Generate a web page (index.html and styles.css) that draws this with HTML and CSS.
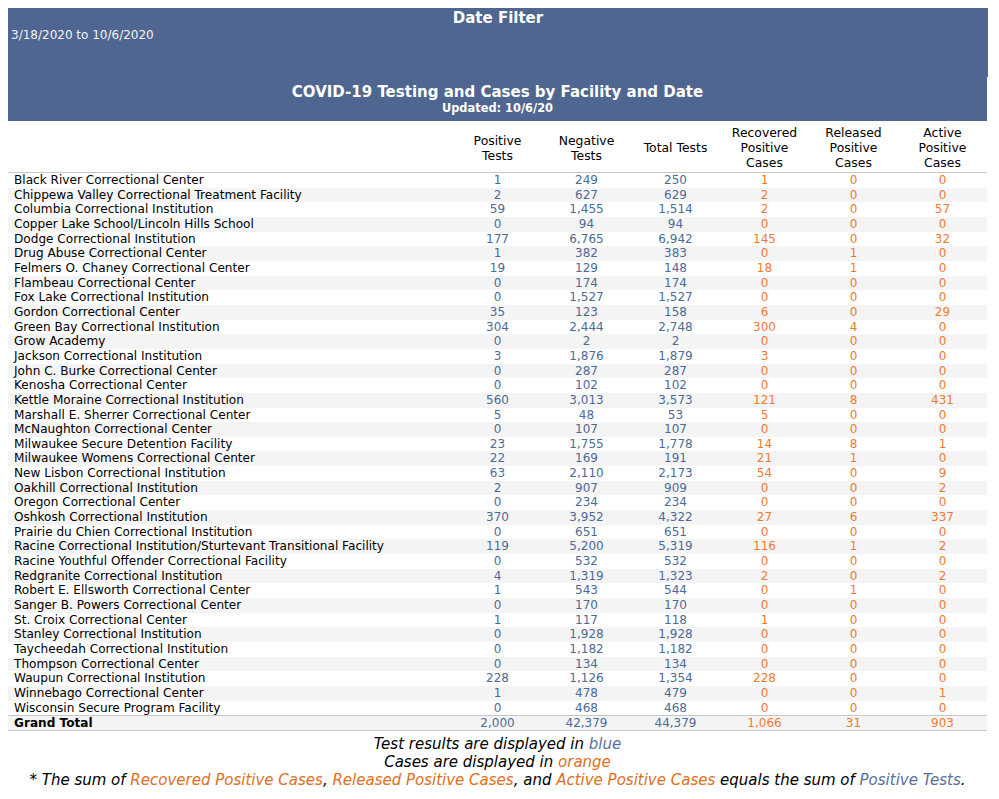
FILE: index.html
```html
<!DOCTYPE html>
<html>
<head>
<meta charset="utf-8">
<link rel="stylesheet" href="styles.css">
</head>
<body>
<div class="band band-top">
  <div class="band-title">Date Filter</div>
  <div class="band-range">3/18/2020 to 10/6/2020</div>
</div>
<div class="band band-bottom">
  <div class="band-title">COVID-19 Testing and Cases by Facility and Date</div>
  <div class="band-sub">Updated: 10/6/20</div>
</div>
<table class="grid">
  <thead>
    <tr>
      <th class="name-col"></th>
      <th>Positive<br>Tests</th>
      <th>Negative<br>Tests</th>
      <th>Total Tests</th>
      <th>Recovered<br>Positive<br>Cases</th>
      <th>Released<br>Positive<br>Cases</th>
      <th>Active<br>Positive<br>Cases</th>
    </tr>
  </thead>
  <tbody>
    <tr><td class="name">Black River Correctional Center</td><td class="t">1</td><td class="t">249</td><td class="t">250</td><td class="c">1</td><td class="c">0</td><td class="c">0</td></tr>
    <tr><td class="name">Chippewa Valley Correctional Treatment Facility</td><td class="t">2</td><td class="t">627</td><td class="t">629</td><td class="c">2</td><td class="c">0</td><td class="c">0</td></tr>
    <tr><td class="name">Columbia Correctional Institution</td><td class="t">59</td><td class="t">1,455</td><td class="t">1,514</td><td class="c">2</td><td class="c">0</td><td class="c">57</td></tr>
    <tr><td class="name">Copper Lake School/Lincoln Hills School</td><td class="t">0</td><td class="t">94</td><td class="t">94</td><td class="c">0</td><td class="c">0</td><td class="c">0</td></tr>
    <tr><td class="name">Dodge Correctional Institution</td><td class="t">177</td><td class="t">6,765</td><td class="t">6,942</td><td class="c">145</td><td class="c">0</td><td class="c">32</td></tr>
    <tr><td class="name">Drug Abuse Correctional Center</td><td class="t">1</td><td class="t">382</td><td class="t">383</td><td class="c">0</td><td class="c">1</td><td class="c">0</td></tr>
    <tr><td class="name">Felmers O. Chaney Correctional Center</td><td class="t">19</td><td class="t">129</td><td class="t">148</td><td class="c">18</td><td class="c">1</td><td class="c">0</td></tr>
    <tr><td class="name">Flambeau Correctional Center</td><td class="t">0</td><td class="t">174</td><td class="t">174</td><td class="c">0</td><td class="c">0</td><td class="c">0</td></tr>
    <tr><td class="name">Fox Lake Correctional Institution</td><td class="t">0</td><td class="t">1,527</td><td class="t">1,527</td><td class="c">0</td><td class="c">0</td><td class="c">0</td></tr>
    <tr><td class="name">Gordon Correctional Center</td><td class="t">35</td><td class="t">123</td><td class="t">158</td><td class="c">6</td><td class="c">0</td><td class="c">29</td></tr>
    <tr><td class="name">Green Bay Correctional Institution</td><td class="t">304</td><td class="t">2,444</td><td class="t">2,748</td><td class="c">300</td><td class="c">4</td><td class="c">0</td></tr>
    <tr><td class="name">Grow Academy</td><td class="t">0</td><td class="t">2</td><td class="t">2</td><td class="c">0</td><td class="c">0</td><td class="c">0</td></tr>
    <tr><td class="name">Jackson Correctional Institution</td><td class="t">3</td><td class="t">1,876</td><td class="t">1,879</td><td class="c">3</td><td class="c">0</td><td class="c">0</td></tr>
    <tr><td class="name">John C. Burke Correctional Center</td><td class="t">0</td><td class="t">287</td><td class="t">287</td><td class="c">0</td><td class="c">0</td><td class="c">0</td></tr>
    <tr><td class="name">Kenosha Correctional Center</td><td class="t">0</td><td class="t">102</td><td class="t">102</td><td class="c">0</td><td class="c">0</td><td class="c">0</td></tr>
    <tr><td class="name">Kettle Moraine Correctional Institution</td><td class="t">560</td><td class="t">3,013</td><td class="t">3,573</td><td class="c">121</td><td class="c">8</td><td class="c">431</td></tr>
    <tr><td class="name">Marshall E. Sherrer Correctional Center</td><td class="t">5</td><td class="t">48</td><td class="t">53</td><td class="c">5</td><td class="c">0</td><td class="c">0</td></tr>
    <tr><td class="name">McNaughton Correctional Center</td><td class="t">0</td><td class="t">107</td><td class="t">107</td><td class="c">0</td><td class="c">0</td><td class="c">0</td></tr>
    <tr><td class="name">Milwaukee Secure Detention Facility</td><td class="t">23</td><td class="t">1,755</td><td class="t">1,778</td><td class="c">14</td><td class="c">8</td><td class="c">1</td></tr>
    <tr><td class="name">Milwaukee Womens Correctional Center</td><td class="t">22</td><td class="t">169</td><td class="t">191</td><td class="c">21</td><td class="c">1</td><td class="c">0</td></tr>
    <tr><td class="name">New Lisbon Correctional Institution</td><td class="t">63</td><td class="t">2,110</td><td class="t">2,173</td><td class="c">54</td><td class="c">0</td><td class="c">9</td></tr>
    <tr><td class="name">Oakhill Correctional Institution</td><td class="t">2</td><td class="t">907</td><td class="t">909</td><td class="c">0</td><td class="c">0</td><td class="c">2</td></tr>
    <tr><td class="name">Oregon Correctional Center</td><td class="t">0</td><td class="t">234</td><td class="t">234</td><td class="c">0</td><td class="c">0</td><td class="c">0</td></tr>
    <tr><td class="name">Oshkosh Correctional Institution</td><td class="t">370</td><td class="t">3,952</td><td class="t">4,322</td><td class="c">27</td><td class="c">6</td><td class="c">337</td></tr>
    <tr><td class="name">Prairie du Chien Correctional Institution</td><td class="t">0</td><td class="t">651</td><td class="t">651</td><td class="c">0</td><td class="c">0</td><td class="c">0</td></tr>
    <tr><td class="name">Racine Correctional Institution/Sturtevant Transitional Facility</td><td class="t">119</td><td class="t">5,200</td><td class="t">5,319</td><td class="c">116</td><td class="c">1</td><td class="c">2</td></tr>
    <tr><td class="name">Racine Youthful Offender Correctional Facility</td><td class="t">0</td><td class="t">532</td><td class="t">532</td><td class="c">0</td><td class="c">0</td><td class="c">0</td></tr>
    <tr><td class="name">Redgranite Correctional Institution</td><td class="t">4</td><td class="t">1,319</td><td class="t">1,323</td><td class="c">2</td><td class="c">0</td><td class="c">2</td></tr>
    <tr><td class="name">Robert E. Ellsworth Correctional Center</td><td class="t">1</td><td class="t">543</td><td class="t">544</td><td class="c">0</td><td class="c">1</td><td class="c">0</td></tr>
    <tr><td class="name">Sanger B. Powers Correctional Center</td><td class="t">0</td><td class="t">170</td><td class="t">170</td><td class="c">0</td><td class="c">0</td><td class="c">0</td></tr>
    <tr><td class="name">St. Croix Correctional Center</td><td class="t">1</td><td class="t">117</td><td class="t">118</td><td class="c">1</td><td class="c">0</td><td class="c">0</td></tr>
    <tr><td class="name">Stanley Correctional Institution</td><td class="t">0</td><td class="t">1,928</td><td class="t">1,928</td><td class="c">0</td><td class="c">0</td><td class="c">0</td></tr>
    <tr><td class="name">Taycheedah Correctional Institution</td><td class="t">0</td><td class="t">1,182</td><td class="t">1,182</td><td class="c">0</td><td class="c">0</td><td class="c">0</td></tr>
    <tr><td class="name">Thompson Correctional Center</td><td class="t">0</td><td class="t">134</td><td class="t">134</td><td class="c">0</td><td class="c">0</td><td class="c">0</td></tr>
    <tr><td class="name">Waupun Correctional Institution</td><td class="t">228</td><td class="t">1,126</td><td class="t">1,354</td><td class="c">228</td><td class="c">0</td><td class="c">0</td></tr>
    <tr><td class="name">Winnebago Correctional Center</td><td class="t">1</td><td class="t">478</td><td class="t">479</td><td class="c">0</td><td class="c">0</td><td class="c">1</td></tr>
    <tr><td class="name">Wisconsin Secure Program Facility</td><td class="t">0</td><td class="t">468</td><td class="t">468</td><td class="c">0</td><td class="c">0</td><td class="c">0</td></tr>
  </tbody>
  <tfoot>
    <tr><td class="name total-name">Grand Total</td><td class="t">2,000</td><td class="t">42,379</td><td class="t">44,379</td><td class="c">1,066</td><td class="c">31</td><td class="c">903</td></tr>
  </tfoot>
</table>
<div class="legend">
  <div>Test results are displayed in <span class="lb">blue</span></div>
  <div>Cases are displayed in <span class="lo">orange</span></div>
  <div>* The sum of <span class="lo">Recovered Positive Cases</span>, <span class="lo">Released Positive Cases</span>, and <span class="lo">Active Positive Cases</span> equals the sum of <span class="lb">Positive Tests</span>.</div>
</div>
</body>
</html>
```

FILE: styles.css
```css
html, body {
  margin: 0;
  padding: 0;
  background: #ffffff;
}
body {
  padding: 8px;
  font-family: "DejaVu Sans", "Liberation Sans", sans-serif;
  color: #000;
}
.band {
  background: #4f6790;
  color: #ffffff;
  box-sizing: border-box;
}
.band-top {
  width: 980px;
  height: 69px;
  padding-top: 1px;
}
.band-bottom {
  width: 979px;
  height: 44px;
  padding-top: 6px;
}
.band-title {
  text-align: center;
  font-weight: bold;
  font-size: 15px;
  line-height: 18px;
}
.band-range {
  font-size: 12px;
  line-height: 15px;
  padding-left: 3px;
  margin-top: 1px;
  color: #f2f2f2;
}
.band-sub {
  text-align: center;
  font-weight: bold;
  font-size: 11.4px;
  line-height: 13px;
  margin-top: 1px;
}
.grid {
  width: 979px;
  border-collapse: collapse;
  font-size: 12px;
  table-layout: fixed;
}
.grid th {
  font-weight: normal;
  font-size: 12.4px;
  line-height: 15px;
  width: 89px;
  text-align: center;
  vertical-align: middle;
  padding: 4px 0 2px 0;
  height: 44px;
  border-bottom: 1px solid #c8c8c8;
}
.grid th.name-col {
  width: auto;
}
.grid td {
  line-height: 14.65px;
  padding: 0;
  text-align: center;
  white-space: nowrap;
}
.grid td.name {
  text-align: left;
  padding-left: 6px;
  font-size: 12.1px;
}
.grid tbody tr:nth-child(even) td {
  background: #f4f4f4;
}
.t {
  color: #4e6a96;
}
.c {
  color: #f07a2f;
}
.grid tfoot td {
  background: #f4f4f4;
  border-top: 1px solid #c8c8c8;
  border-bottom: 1px solid #c8c8c8;
  line-height: 14px;
}
.total-name {
  font-weight: bold;
  color: #000;
}
.legend {
  width: 979px;
  text-align: center;
  font-style: italic;
  font-size: 15px;
  line-height: 18px;
  margin-top: 4px;
}
.lb {
  color: #5a6fa0;
}
.lo {
  color: #e07020;
}
```
